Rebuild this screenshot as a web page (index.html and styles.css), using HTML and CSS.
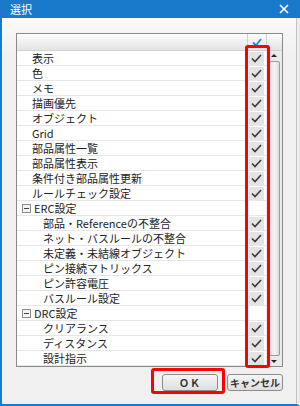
FILE: index.html
```html
<!DOCTYPE html>
<html lang="ja">
<head>
    <meta charset="UTF-8">
    <title>選択</title>
    <link rel="stylesheet" href="styles.css">
</head>
<body>

    <div class="window">
        <div class="titlebar">
            <span class="title">選択</span>
            <svg class="close" width="10" height="10" viewBox="0 0 10 10">
                <path d="M1 1 L9 9 M9 1 L1 9" stroke="#fff" stroke-width="1.6"/>
            </svg>
        </div>

        <div class="content">
            <!-- list with header -->
            <div class="list">
                <div class="list-head">
                    <div class="head-name"></div>
                    <div class="head-check">
                        <svg width="10" height="9" viewBox="0 0 10 9">
                            <path d="M1 4.5 L4 7.5 L9 1" fill="none" stroke="#2a7de1" stroke-width="1.8"/>
                        </svg>
                    </div>
                    <div class="head-scroll"></div>
                </div>
                <div class="list-body">
                    <div class="rows">
                        <div class="row"><span class="name">表示</span><span class="cell on"></span></div>
                        <div class="row"><span class="name">色</span><span class="cell on"></span></div>
                        <div class="row"><span class="name">メモ</span><span class="cell on"></span></div>
                        <div class="row"><span class="name">描画優先</span><span class="cell on"></span></div>
                        <div class="row"><span class="name">オブジェクト</span><span class="cell on"></span></div>
                        <div class="row"><span class="name">Grid</span><span class="cell on"></span></div>
                        <div class="row"><span class="name">部品属性一覧</span><span class="cell on"></span></div>
                        <div class="row"><span class="name">部品属性表示</span><span class="cell on"></span></div>
                        <div class="row"><span class="name">条件付き部品属性更新</span><span class="cell on"></span></div>
                        <div class="row"><span class="name">ルールチェック設定</span><span class="cell on"></span></div>
                        <div class="row group"><span class="name"><span class="minus"></span>ERC設定</span><span class="cell"></span></div>
                        <div class="row sub"><span class="name">部品・Referenceの不整合</span><span class="cell on"></span></div>
                        <div class="row sub"><span class="name">ネット・バスルールの不整合</span><span class="cell on"></span></div>
                        <div class="row sub"><span class="name">未定義・未結線オブジェクト</span><span class="cell on"></span></div>
                        <div class="row sub"><span class="name">ピン接続マトリックス</span><span class="cell on"></span></div>
                        <div class="row sub"><span class="name">ピン許容電圧</span><span class="cell on"></span></div>
                        <div class="row sub"><span class="name">バスルール設定</span><span class="cell on"></span></div>
                        <div class="row group"><span class="name"><span class="minus"></span>DRC設定</span><span class="cell"></span></div>
                        <div class="row sub"><span class="name">クリアランス</span><span class="cell on"></span></div>
                        <div class="row sub"><span class="name">ディスタンス</span><span class="cell on"></span></div>
                        <div class="row sub"><span class="name">設計指示</span><span class="cell on"></span></div>
                    </div>
                    <div class="scrollbar">
                        <span class="arrow up"></span>
                        <div class="thumb"></div>
                        <span class="arrow down"></span>
                    </div>
                </div>
                <!-- red highlight over the check column -->
                <div class="mark mark-checks"></div>
            </div>

            <div class="buttons">
                <button class="btn ok">ＯＫ</button>
                <button class="btn">キャンセル</button>
                <div class="mark mark-ok"></div>
            </div>
        </div>
    </div>

    <script>
        // put the check mark into every checked cell
        var cells = document.getElementsByClassName("on");
        for (var i = 0; i < cells.length; i++) {
            cells[i].innerHTML = '<svg width="11" height="9" viewBox="0 0 11 9"><path d="M1 4.5 L4 7.5 L10 1" fill="none" stroke="#3a3a3a" stroke-width="1.6"/></svg>';
        }
    </script>

</body>
</html>
```

FILE: styles.css
```css
body {
    margin: 0;
    padding: 0;
    font-family: "Noto Sans CJK JP", "Noto Sans", sans-serif;
    font-size: 11px;
    color: #222;
}
.window {
    width: 300px;
    height: 406px;
    box-sizing: border-box;
    background-color: #f0f0f0;
    border-left: 2px solid #1979ca;
    border-bottom: 2px solid #1979ca;
    border-right: 3px solid #ececec;
    display: flex;
    flex-direction: column;
    position: relative;
}
.window::after {
    /* thin frame line on the right */
    content: "";
    position: absolute;
    right: 0;
    top: 18px;
    bottom: 0;
    width: 1px;
    background-color: #c4c4c4;
}
.titlebar {
    height: 18px;
    margin-left: -2px;
    margin-right: -3px;
    background-color: #1979ca;
    display: flex;
    align-items: center;
    justify-content: space-between;
    padding: 0 10px 0 10px;
    color: #fff;
    font-size: 11px;
}
.close {
    margin-right: 1px;
}
.content {
    flex: 1;
    padding: 15px 0 0 14px;
    background: linear-gradient(#f9f9f9, #f0f0f0 40px);
}
.list {
    position: relative;
    width: 267px;
    box-sizing: border-box;
    border: 1px solid #8a8a8a;
    background-color: #fff;
}
.list-head {
    display: flex;
    height: 17px;
    background: linear-gradient(#fdfdfd, #e4e4e4);
    border-bottom: 1px solid #d2d2d2;
    box-sizing: border-box;
}
.head-name {
    width: 230px;
    border-right: 1px solid #d2d2d2;
}
.head-check {
    width: 18px;
    border-right: 1px solid #d2d2d2;
    display: flex;
    align-items: center;
    justify-content: center;
}
.head-scroll {
    flex: 1;
}
.list-body {
    display: flex;
}
.rows {
    width: 249px;
}
.row {
    display: flex;
    height: 15px;
    box-sizing: border-box;
    border-bottom: 1px solid #e6e6e6;
    align-items: center;
}
.row .name {
    width: 230px;
    padding-left: 15px;
    box-sizing: border-box;
    line-height: 14px;
    white-space: nowrap;
    overflow: hidden;
    display: flex;
    align-items: center;
}
.row.sub .name {
    padding-left: 26px;
}
.row.group .name {
    padding-left: 5px;
}
.minus {
    width: 7px;
    height: 7px;
    border: 1px solid #8a8a8a;
    background-color: #f4f4f4;
    margin-right: 3px;
    position: relative;
}
.minus::after {
    content: "";
    position: absolute;
    left: 1px;
    right: 1px;
    top: 3px;
    height: 1px;
    background-color: #444;
}
.cell {
    width: 19px;
    height: 14px;
    display: flex;
    align-items: center;
    justify-content: center;
}
.cell.on svg {
    background-color: #e4e4e4;
    padding: 2px 2px;
}
.scrollbar {
    flex: 1;
    background-color: #eaeaea;
    display: flex;
    flex-direction: column;
    align-items: center;
    padding: 3px 0;
}
.arrow {
    width: 0;
    height: 0;
    border-left: 3px solid transparent;
    border-right: 3px solid transparent;
}
.arrow.up {
    border-bottom: 3px solid #222;
}
.arrow.down {
    border-top: 3px solid #222;
}
.thumb {
    flex: 1;
    width: 9px;
    margin: 4px 0;
    border: 1px solid #9c9c9c;
    border-radius: 2px;
    background: linear-gradient(to right, #e2e2e2, #f4f4f4, #dcdcdc);
}
.buttons {
    position: relative;
    width: 267px;
    display: flex;
    justify-content: flex-end;
    gap: 9px;
    margin-top: 7px;
}
.btn {
    width: 56px;
    height: 17px;
    padding: 0;
    border: 1px solid #8c8c8c;
    border-radius: 3px;
    background: linear-gradient(#f6f6f6, #dedede);
    font-family: "Noto Sans CJK JP", sans-serif;
    font-size: 10px;
    font-weight: bold;
    color: #333;
    line-height: 15px;
}
.btn.ok {
    letter-spacing: 1px;
}
/* red highlight boxes */
.mark {
    position: absolute;
    border: 3px solid #ff0000;
    border-radius: 3px;
}
.mark-checks {
    left: 228px;
    top: 11px;
    width: 19px;
    height: 317px;
}
.mark-ok {
    left: 135px;
    top: -6px;
    width: 68px;
    height: 20px;
}
```
